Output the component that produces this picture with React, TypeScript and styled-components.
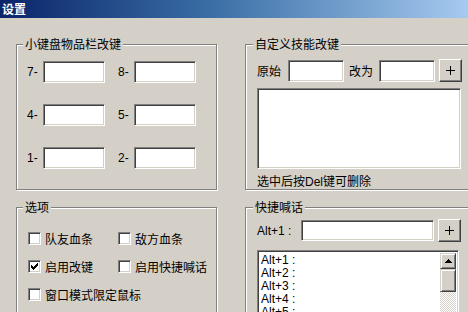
import React from "react";
import styled, { createGlobalStyle } from "styled-components";

const GlobalStyle = createGlobalStyle`
  html, body {
    margin: 0;
    padding: 0;
    background: #d4d0c8;
    overflow: hidden;
  }
  body {
    font-family: "Liberation Sans", "Noto Sans CJK SC", sans-serif;
    font-size: 12px;
    color: #000;
  }
`;

const Window = styled.div`
  width: 468px;
  height: 312px;
  display: flex;
  flex-direction: column;
  background: #d4d0c8;
  overflow: hidden;
`;

const TitleBar = styled.div`
  height: 18px;
  flex: none;
  padding-left: 2px;
  background: linear-gradient(to right, #0a246a 0%, #3a6ea5 45%, #a6caf0 100%);
  color: #fff;
  font-family: "Noto Sans CJK SC", sans-serif;
  font-weight: bold;
  font-size: 12px;
  line-height: 18px;
`;

const Body = styled.div`
  display: flex;
  gap: 27px;
  padding: 19px 0 0 16px;
`;

const Column = styled.div<{ $width: number }>`
  width: ${(p) => p.$width}px;
  flex: none;
  display: flex;
  flex-direction: column;
  gap: 9px;
`;

const Group = styled.fieldset`
  margin: 0 1px 1px 0;
  padding: 0;
  min-width: 0;
  border: 1px solid #808080;
  box-shadow: 1px 1px 0 #fff, inset 1px 1px 0 #fff;
`;

const Legend = styled.legend<{ $offset: number }>`
  margin-left: ${(p) => p.$offset}px;
  padding: 0 2px;
  line-height: 14px;
  height: 14px;
  background: #d4d0c8;
  font-family: "Noto Sans CJK SC", sans-serif;
  font-size: 12px;
`;

const Inner = styled.div<{ $top: number; $bottom: number; $left: number }>`
  display: flex;
  flex-direction: column;
  padding: ${(p) => `${p.$top}px 0 ${p.$bottom}px ${p.$left}px`};
`;

const KeyGrid = styled.div`
  display: grid;
  grid-template-columns: 78px 78px;
  column-gap: 13px;
  row-gap: 21px;
`;

const KeyCell = styled.div`
  display: flex;
  align-items: center;
  height: 22px;
`;

const KeyLabel = styled.span`
  width: 16px;
  flex: none;
`;

const Edit = styled.div<{ $w: number; $h?: number }>`
  box-sizing: border-box;
  width: ${(p) => p.$w}px;
  height: ${(p) => p.$h ?? 22}px;
  flex: none;
  background: #fff;
  border: 1px solid;
  border-color: #808080 #fff #fff #808080;
  box-shadow: inset 1px 1px 0 #404040, inset -1px -1px 0 #d4d0c8;
`;

const FieldRow = styled.div`
  display: flex;
  align-items: center;
  height: 23px;
`;

const FieldLabel = styled.span<{ $w: number; $gap: number }>`
  width: ${(p) => p.$w}px;
  margin-right: ${(p) => p.$gap}px;
  flex: none;
  font-family: "Noto Sans CJK SC", sans-serif;
  white-space: nowrap;
`;

const AltLabel = styled.span`
  width: 44px;
  flex: none;
  white-space: nowrap;
`;

const Spacer = styled.span<{ $w: number }>`
  width: ${(p) => p.$w}px;
  flex: none;
`;

const PlusButton = styled.button`
  box-sizing: border-box;
  width: 23px;
  height: 23px;
  flex: none;
  padding: 0;
  background: #d4d0c8;
  border: 1px solid;
  border-color: #fff #404040 #404040 #fff;
  box-shadow: inset -1px -1px 0 #808080, inset 1px 1px 0 #d4d0c8;
  display: flex;
  align-items: center;
  justify-content: center;
`;

const ListBox = styled.div<{ $w: number; $h: number; $mt: number }>`
  box-sizing: border-box;
  width: ${(p) => p.$w}px;
  height: ${(p) => p.$h}px;
  margin-top: ${(p) => p.$mt}px;
  background: #fff;
  border: 1px solid;
  border-color: #808080 #fff #fff #808080;
  box-shadow: inset 1px 1px 0 #404040, inset -1px -1px 0 #d4d0c8;
  display: flex;
  padding: 2px;
`;

const Items = styled.ul`
  flex: 1;
  margin: 0;
  padding: 1px 0 0 1px;
  list-style: none;
`;

const Item = styled.li`
  height: 13px;
  line-height: 13px;
  white-space: nowrap;
`;

const ScrollBar = styled.div`
  width: 16px;
  flex: none;
  display: flex;
  flex-direction: column;
  background-color: #fff;
  background-image: conic-gradient(#d4d0c8 25%, #fff 0 50%, #d4d0c8 0 75%, #fff 0);
  background-size: 2px 2px;
`;

const ScrollPart = styled.div<{ $h: number }>`
  box-sizing: border-box;
  height: ${(p) => p.$h}px;
  flex: none;
  background: #d4d0c8;
  border: 1px solid;
  border-color: #d4d0c8 #404040 #404040 #d4d0c8;
  box-shadow: inset 1px 1px 0 #fff, inset -1px -1px 0 #808080;
  display: flex;
  align-items: center;
  justify-content: center;
`;

const Note = styled.div`
  margin-top: 5px;
  height: 14px;
  line-height: 14px;
  font-family: "Noto Sans CJK SC", sans-serif;
  white-space: nowrap;
`;

const DelText = styled.span`
  font-family: "Liberation Sans", sans-serif;
`;

const OptionGrid = styled.div`
  display: grid;
  grid-template-columns: 90px 100px;
  grid-auto-rows: 16px;
  row-gap: 12px;
`;

const Option = styled.label`
  display: flex;
  align-items: center;
  gap: 4px;
  font-family: "Noto Sans CJK SC", sans-serif;
  white-space: nowrap;
`;

const Wide = styled(Option)`
  grid-column: 1 / span 2;
`;

const Box = styled.span`
  box-sizing: border-box;
  width: 13px;
  height: 13px;
  flex: none;
  background: #fff;
  border: 1px solid;
  border-color: #808080 #fff #fff #808080;
  box-shadow: inset 1px 1px 0 #404040, inset -1px -1px 0 #d4d0c8;
  display: flex;
  align-items: center;
  justify-content: center;
`;

function Check({ checked }: { checked?: boolean }) {
  return (
    <Box>
      {checked && (
        <svg width="7" height="7" viewBox="0 0 7 7" shapeRendering="crispEdges">
          <path d="M0 2h1v1h1v1h1v-1h1v-1h1v-1h1v-1h1v3h-1v1h-1v1h-1v1h-1v1h-1v-1h-1v-1h-1v-1h-1z" fill="#000" />
        </svg>
      )}
    </Box>
  );
}

function Plus() {
  return (
    <PlusButton>
      <svg width="9" height="9" viewBox="0 0 9 9" shapeRendering="crispEdges">
        <path d="M4 0h1v4h4v1h-4v4h-1v-4h-4v-1h4z" fill="#000" />
      </svg>
    </PlusButton>
  );
}

const numKeys = ["7", "8", "4", "5", "1", "2"];
const alts = [1, 2, 3, 4, 5];

export default function App() {
  return (
    <>
      <GlobalStyle />
      <Window>
        <TitleBar>设置</TitleBar>
        <Body>
          <Column $width={202}>
            <Group>
              <Legend $offset={6}>小键盘物品栏改键</Legend>
              <Inner $top={10} $bottom={20} $left={10}>
                <KeyGrid>
                  {numKeys.map((k) => (
                    <KeyCell key={k}>
                      <KeyLabel>{k}-</KeyLabel>
                      <Edit $w={62} />
                    </KeyCell>
                  ))}
                </KeyGrid>
              </Inner>
            </Group>
            <Group>
              <Legend $offset={6}>选项</Legend>
              <Inner $top={16} $bottom={20} $left={11}>
                <OptionGrid>
                  <Option>
                    <Check />
                    队友血条
                  </Option>
                  <Option>
                    <Check />
                    敌方血条
                  </Option>
                  <Option>
                    <Check checked />
                    启用改键
                  </Option>
                  <Option>
                    <Check />
                    启用快捷喊话
                  </Option>
                  <Wide>
                    <Check />
                    窗口模式限定鼠标
                  </Wide>
                </OptionGrid>
              </Inner>
            </Group>
          </Column>
          <Column $width={232}>
            <Group>
              <Legend $offset={7}>自定义技能改键</Legend>
              <Inner $top={8} $bottom={1} $left={11}>
                <FieldRow>
                  <FieldLabel $w={24} $gap={7}>
                    原始
                  </FieldLabel>
                  <Edit $w={56} />
                  <Spacer $w={5} />
                  <FieldLabel $w={24} $gap={6}>
                    改为
                  </FieldLabel>
                  <Edit $w={56} />
                  <Spacer $w={4} />
                  <Plus />
                </FieldRow>
                <ListBox $w={204} $h={81} $mt={6} />
                <Note>
                  选中后按<DelText>Del</DelText>键可删除
                </Note>
              </Inner>
            </Group>
            <Group>
              <Legend $offset={7}>快捷喊话</Legend>
              <Inner $top={5} $bottom={20} $left={11}>
                <FieldRow>
                  <AltLabel>Alt+1 :</AltLabel>
                  <Edit $w={133} $h={21} />
                  <Spacer $w={4} />
                  <Plus />
                </FieldRow>
                <ListBox $w={202} $h={110} $mt={8}>
                  <Items>
                    {alts.map((n) => (
                      <Item key={n}>Alt+{n} :</Item>
                    ))}
                  </Items>
                  <ScrollBar>
                    <ScrollPart $h={16}>
                      <svg width="7" height="4" viewBox="0 0 7 4" shapeRendering="crispEdges">
                        <path d="M3 0h1v1h1v1h1v1h1v1h-7v-1h1v-1h1v-1h1z" fill="#000" />
                      </svg>
                    </ScrollPart>
                    <ScrollPart $h={23} />
                  </ScrollBar>
                </ListBox>
              </Inner>
            </Group>
          </Column>
        </Body>
      </Window>
    </>
  );
}
